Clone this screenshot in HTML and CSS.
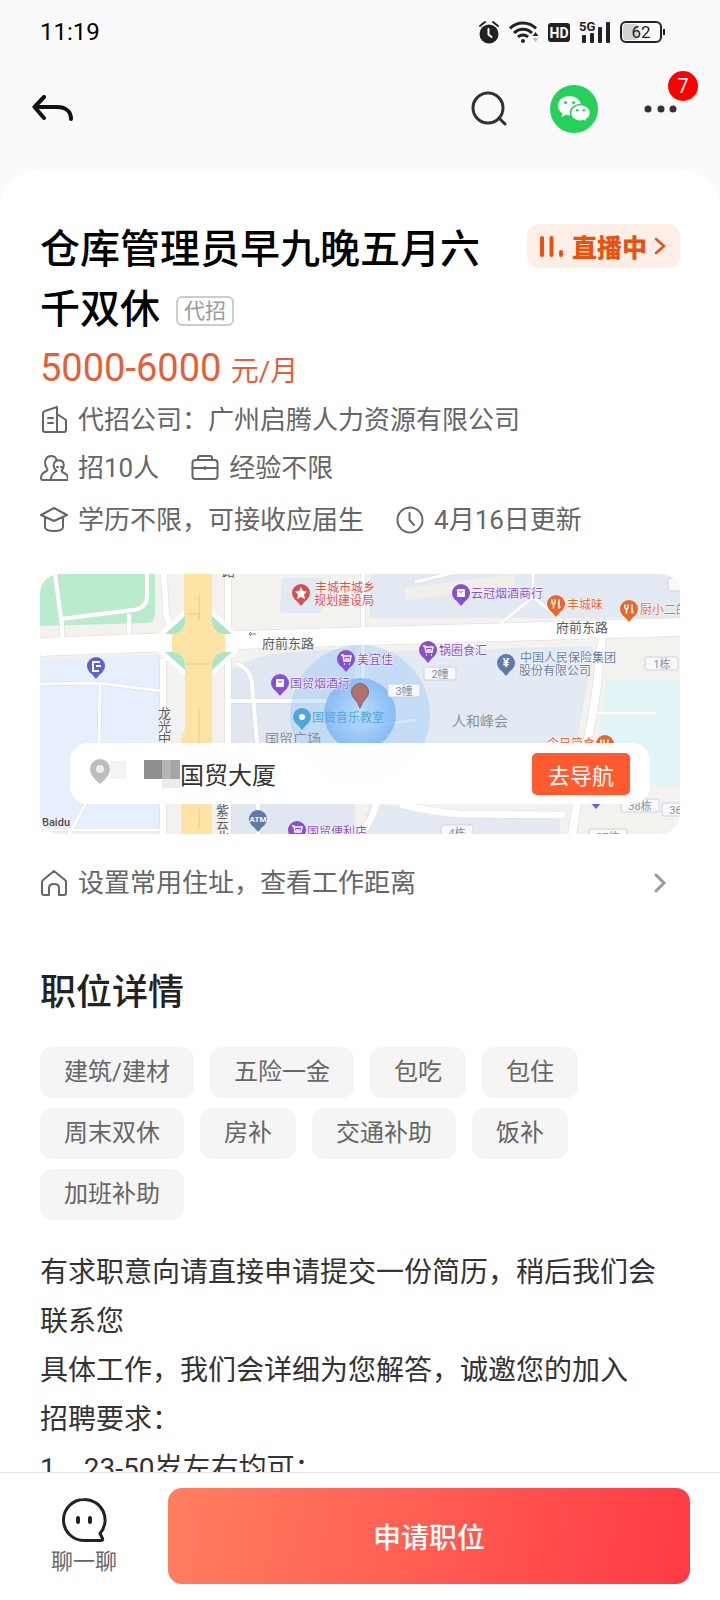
FILE: index.html
```html
<!DOCTYPE html>
<html lang="zh-CN">
  <head>
    <meta charset="UTF-8" />
    <meta name="viewport" content="width=device-width, initial-scale=1.0" />
    <title>职位详情</title>
    <link rel="stylesheet" href="styles.css">
  </head>
  <body>
    <div class="status-bar">
      <span class="time">11:19</span>
      <div class="status-icons">
        <svg width="22" height="24" viewBox="0 0 22 24">
          <circle cx="11" cy="14" r="9.500" fill="#222" />
          <path d="M2 6l5-4M20 6l-5-4" stroke="#222" stroke-width="2" stroke-linecap="round" />
          <path d="M10.500 9v5.500l3 2.500" stroke="#fff" stroke-width="2" fill="none" stroke-linecap="round" />
        </svg>
        <svg width="30" height="24" viewBox="0 0 30 24">
          <g fill="none" stroke="#222" stroke-width="3">
            <path d="M1 8.500a18 18 0 0 1 26 0" />
            <path d="M5 13a12.500 12.500 0 0 1 18 0" />
            <path d="M9 17a7.500 7.500 0 0 1 10 0" />
          </g>
          <circle cx="14" cy="21" r="2" fill="#222" />
          <path d="M26.500 12l3 4h-6z" fill="#222" />
          <path d="M26.500 22l3-4h-6z" fill="#bbb" />
        </svg>
        <svg width="22" height="24" viewBox="0 0 22 24">
          <rect x="0" y="3" width="22" height="19" rx="3" fill="#222" />
          <text x="11" y="18" class="hd-text">HD</text>
        </svg>
        <svg width="32" height="24" viewBox="0 0 32 24">
          <text x="0" y="11" class="net-text">5G</text>
          <g fill="#222">
            <rect x="3" y="15" width="4" height="8" rx="1" />
            <rect x="11" y="13" width="4" height="10" rx="1" />
            <rect x="19" y="7" width="4" height="16" rx="1" />
            <rect x="27" y="2" width="4" height="21" rx="1" />
          </g>
        </svg>
        <svg width="46" height="24" viewBox="0 0 46 24">
          <rect x="3" y="4" width="15" height="16" rx="3" fill="#d3d3d3" />
          <rect x="1" y="2" width="40" height="20" rx="5" fill="none" stroke="#222" stroke-width="2" />
          <path d="M44 9v6" stroke="#222" stroke-width="2" />
          <text x="21" y="18" class="battery-text">62</text>
        </svg>
      </div>
    </div>

    <nav class="nav-bar">
      <button class="icon-btn" aria-label="返回">
        <svg width="42" height="28" viewBox="0 0 42 28" fill="none" stroke="#111" stroke-width="4" stroke-linecap="round" stroke-linejoin="round">
          <path d="M12 2L2.500 12L12 23M3 12h22c8 0 14 4 14 12" />
        </svg>
      </button>
      <div class="nav-actions">
        <button class="icon-btn" aria-label="搜索">
          <svg width="38" height="38" viewBox="0 0 38 38" fill="none" stroke="#333" stroke-width="3" stroke-linecap="round">
            <circle cx="18" cy="18" r="15" />
            <path d="M29 28l6 6" />
          </svg>
        </button>
        <button class="icon-btn" aria-label="微信">
          <svg width="48" height="48" viewBox="0 0 48 48">
            <circle cx="24" cy="24" r="24" fill="#25d15a" />
            <path d="M19.500 11C13 11 8 15.300 8 20.800c0 3.200 1.800 6 4.500 7.800L11.500 32l4.300-2.200c1.200.3 2.400.5 3.700.5 6.500 0 11.500-4.200 11.500-9.500S26 11 19.500 11z" fill="#fff" />
            <path d="M30.500 19.500c-5.600 0-10 3.700-10 8.300s4.400 8.400 10 8.400c1.200 0 2.300-.2 3.400-.5l3.400 1.800-.8-3c2.500-1.500 4-4 4-6.700 0-4.600-4.400-8.300-10-8.300z" fill="#fff" stroke="#25d15a" stroke-width="1.500" />
            <g fill="#25d15a">
              <circle cx="15.500" cy="17.500" r="1.600" />
              <circle cx="23.500" cy="17.500" r="1.600" />
              <circle cx="27.300" cy="25.300" r="1.300" />
              <circle cx="33.800" cy="25.300" r="1.300" />
            </g>
          </svg>
        </button>
        <button class="icon-btn more-btn" aria-label="更多">
          <svg width="34" height="48" viewBox="0 0 34 48" fill="#333">
            <circle cx="4" cy="24" r="3.500" />
            <circle cx="17" cy="24" r="3.500" />
            <circle cx="29" cy="24" r="3.500" />
          </svg>
          <span class="badge">7</span>
        </button>
      </div>
    </nav>

    <main class="card">
      <div class="title-row">
        <h1>仓库管理员早九晚五月六千双休<span class="agent-tag">代招</span></h1>
        <a href="#live" class="live">
          <svg width="26" height="24" viewBox="0 0 26 24" stroke="#e8520f" stroke-width="4" stroke-linecap="round">
            <path d="M3 4v17M12.500 4v17M22 18v3" />
          </svg>
          直播中
          <svg width="12" height="20" viewBox="0 0 12 20" fill="none" stroke="#e8520f" stroke-width="2.500" stroke-linecap="round" stroke-linejoin="round">
            <path d="M2 3l8 7l-8 7" />
          </svg>
        </a>
      </div>
      <p class="salary">5000-6000 <span>元/月</span></p>

      <div class="info">
        <div class="info-row">
          <span class="info-item">
            <svg class="icon" viewBox="0 0 28 28">
              <path d="M17 1L5 5q-2 .7-2 2v17q0 2 2 2h12V1zM17 8l9 6v10q0 2-2 2h-7M8 12h5M8 17h5" />
            </svg>
            代招公司：广州启腾人力资源有限公司
          </span>
        </div>
        <div class="info-row">
          <span class="info-item">
            <svg class="icon" viewBox="0 0 28 28">
              <path d="M11 26H2.500Q1 26 1 24c0-4 2-5.500 5.500-7 1.500-.6 1-2 0-3.500C3 7 6.500 2 11 2c3 0 5 1.500 5.500 4" />
              <path d="M16.500 17c-2-2-3.500-4.500-2.500-7.500 1.500-4.500 8.500-4.500 9.500 0 1 3-.5 5-1.500 6.500-1 1 0 2 1.500 2.700C26 20 28 21 28 25q0 1-1 1H12q-1 0-1-1c0-4 2-6 5.500-8M17 13h1M21 13h1" />
            </svg>
            招10人
          </span>
          <span class="info-item">
            <svg class="icon" viewBox="0 0 28 28">
              <rect x="1.500" y="6" width="25" height="19" rx="3" />
              <path d="M7 6V4q0-2 2-2h10q2 0 2 2v2M1.500 14h25M14 13v2" />
            </svg>
            经验不限
          </span>
        </div>
        <div class="info-row">
          <span class="info-item">
            <svg class="icon" viewBox="0 0 28 28">
              <path d="M14 2L1 9l13 6 13-6zM5 11v10q0 4 9 4t9-4V11" />
            </svg>
            学历不限，可接收应届生
          </span>
          <span class="info-item">
            <svg class="icon" viewBox="0 0 28 28">
              <circle cx="14" cy="14" r="12.500" />
              <path d="M13.500 7v7l4.500 5" />
            </svg>
            4月16日更新
          </span>
        </div>
      </div>

      <section class="map">
        <svg class="map-canvas" viewBox="0 0 640 260" preserveAspectRatio="xMidYMid slice">
          <defs>
            <g id="pin">
              <path d="M-5 7L0 13L5 7z" />
              <circle r="9" />
            </g>
            <g id="cart" fill="none" stroke="#fff" stroke-width="1.500">
              <path d="M-5-4h2l1 6h6l1-5h-7M-1 0h4" />
              <path d="M-2 5h1M3 5h1" />
            </g>
            <g id="bag">
              <rect x="-4" y="-4" width="8" height="8" rx="1" fill="#fff" />
              <path d="M-2-2q2 3 4 0" fill="none" stroke="#8a4fd0" />
            </g>
            <g id="fork" fill="none" stroke="#fff" stroke-width="1.500" stroke-linecap="round">
              <path d="M-4-4v3q2 2 3 0v-3M-2.500 0v4M3-4v8M2.500 3h1.500" />
            </g>
            <radialGradient id="range">
              <stop offset="0" stop-color="#b9dcff" />
              <stop offset="1" stop-color="#78b4f4" />
            </radialGradient>
          </defs>
          <rect width="640" height="260" fill="#f3f2ee" />

          <!-- blocks -->
          <path d="M0 0h115v40q0 9-9 9L0 52z" fill="#b8eccd" />
          <path d="M0 86l120-6v180H0z" fill="#e7effc" />
          <path d="M242 4h42l-3 35h-38q-4 0-3-8z" fill="#e2e9f3" />
          <path d="M330 0h310v44l-310 0z" fill="#e2e9f3" />
          <path d="M190 95q30-16 65-17l60-4v186H190z" fill="#e0e7f1" />
          <path d="M328 78l220-6q6 0 5 8l-17 90H328z" fill="#e4eaf4" />
          <path d="M315 160h220v20H315zM330 230l190 14v16H320z" fill="#e4eaf4" />
          <path d="M567 106h73v106h-90z" fill="#e2f5f6" />
          <path d="M365 14l110-14v13l-110 13z" fill="#f1efe9" />

          <!-- street edges, then the white road surface on top -->
          <g class="road-edge">
            <path d="M0 73L130 68L330 62L640 53" stroke-width="19" />
            <path d="M15 0l7 52v14M21 45l72-9q14-2 14-14V0M89 40v22" stroke-width="5" />
            <path d="M124 0l2 40 8 20M123 85v175M188 0v260" stroke-width="7" />
            <path d="M0 110l57-1 66 8M60 110l-1 65M50 222l-22 40M0 256h123" stroke-width="4" />
            <path d="M323 0v130M196 90q14 3 16 20l6 70v80M190 127h100" stroke-width="5" />
            <path d="M563 55l-6 55q-2 20-10 60l-15 90" stroke-width="9" />
            <path d="M557 139h59M375 8l50-12M460 50l33-27 34 27M493 0v20M330 152l46-6" stroke-width="4" />
            <path d="M325 255q12-18 14-40M360 230q30 8 60 10l105 1" stroke-width="8" />
          </g>
          <g class="road">
            <path d="M0 73L130 68L330 62L640 53" stroke-width="18" />
            <path d="M15 0l7 52v14M21 45l72-9q14-2 14-14V0M89 40v22" stroke-width="4" />
            <path d="M124 0l2 40 8 20M123 85v175M188 0v260" stroke-width="6" />
            <path d="M0 110l57-1 66 8M60 110l-1 65M50 222l-22 40M0 256h123" stroke-width="3" />
            <path d="M323 0v130M196 90q14 3 16 20l6 70v80M190 127h100" stroke-width="4" />
            <path d="M563 55l-6 55q-2 20-10 60l-15 90" stroke-width="8" />
            <path d="M557 139h59M375 8l50-12M460 50l33-27 34 27M493 0v20M330 152l46-6" stroke-width="3" />
            <path d="M325 255q12-18 14-40M360 230q30 8 60 10l105 1" stroke-width="7" />
          </g>

          <!-- main avenue -->
          <path d="M118 60l26-24h28l26 24v18l-26 24h-28l-26-24z" fill="#fff" />
          <path d="M144 0h28v44q2 14 13 16v18q-11 2-12 18l-1 8v156h-31v-95l4-10v-59q-2-16-13-18V60q11-2 12-16z" fill="#fde3a6" />
          <path d="M125 60l20-18v6q-2 11-12 12zM192 60l-20-18v6q2 11 12 12zM125 78l20 18v-6q-2-11-12-12zM192 78l-20 18v-6q2-11 12-12z" fill="#a9e5c6" />
          <path d="M159 20v27M147 40h12M146 90h24M159 135v45M159 235v20" stroke="#ebc987" fill="none" />

          <!-- current position -->
          <circle cx="320" cy="141" r="70" fill="#8ac4f8" opacity=".35" />
          <circle cx="320" cy="140" r="36" fill="url(#range)" opacity=".8" />
          <path d="M320 134q-2-6-6-10a8.500 8.500 0 1 1 12 0q-4 4-6 10z" fill="#ae716f" stroke="#905a5c" />

          <g class="building">
            <rect x="384" y="93" width="32" height="13" rx="2" />
            <rect x="348" y="110" width="32" height="13" rx="2" />
            <rect x="605" y="83" width="33" height="13" rx="2" />
            <rect x="581" y="225" width="38" height="13" rx="2" />
            <rect x="622" y="229" width="38" height="13" rx="2" />
            <rect x="401" y="251" width="32" height="13" rx="2" />
            <rect x="549" y="255" width="38" height="13" rx="2" />
            <rect x="628" y="4" width="38" height="13" rx="2" />
            <text x="400" y="104">2幢</text>
            <text x="364" y="121">3幢</text>
            <text x="622" y="94">1栋</text>
            <text x="600" y="236">38栋</text>
            <text x="641" y="240">36栋</text>
            <text x="417" y="263">4栋</text>
            <text x="568" y="267">37栋</text>
          </g>

          <g class="street">
            <text x="222" y="74">府前东路</text>
            <text x="516" y="58">府前东路</text>
            <text x="118" y="144">龙</text>
            <text x="118" y="157">光</text>
            <text x="118" y="169">中</text>
            <text x="176" y="241">紫</text>
            <text x="176" y="254">云</text>
            <text x="176" y="267">北</text>
            <text x="182" y="2">路</text>
          </g>
          <path d="M216 60h-7m2-2l-2 2 2 2" stroke="#777" fill="none" />
          <g class="area">
            <text x="412" y="152">人和峰会</text>
            <text x="225" y="170">国贸广场</text>
          </g>

          <g class="poi gov">
            <use href="#pin" x="261" y="19" />
            <path d="M261 13l2 4 4 .5-3 3 1 4.500-4-2-4 2 1-4.500-3-3 4-.5z" fill="#fff" />
            <text x="275" y="18">丰城市城乡</text>
            <text x="274" y="31">规划建设局</text>
          </g>
          <g class="poi shop">
            <use href="#pin" x="421" y="19" /><use href="#bag" x="421" y="19" />
            <text x="431" y="24">云冠烟酒商行</text>
            <use href="#pin" x="306" y="85" /><use href="#cart" x="306" y="85" />
            <text x="317" y="90">美宜佳</text>
            <use href="#pin" x="240" y="109" /><use href="#bag" x="240" y="109" />
            <text x="250" y="114">国贸烟酒行</text>
            <use href="#pin" x="388" y="76" /><use href="#cart" x="388" y="76" />
            <text x="399" y="81">锅圈食汇</text>
            <use href="#pin" x="257" y="256" /><use href="#cart" x="257" y="256" />
            <text x="267" y="262">国贸便利店</text>
          </g>
          <g class="poi food">
            <use href="#pin" x="516" y="30" /><use href="#fork" x="516" y="30" />
            <text x="527" y="35">丰城味</text>
            <use href="#pin" x="589" y="35" /><use href="#fork" x="589" y="35" />
            <text x="600" y="40">厨小二的</text>
            <use href="#pin" x="565" y="170" /><use href="#fork" x="565" y="170" />
            <text x="507" y="174">今日简食</text>
          </g>
          <g class="poi music">
            <use href="#pin" x="262" y="143" /><circle cx="262" cy="143" r="3" fill="#fff" />
            <text x="272" y="148">国贸音乐教室</text>
          </g>
          <g class="poi bank">
            <use href="#pin" x="466" y="89" />
            <text x="466" y="93" class="pin-text yen">¥</text>
            <text x="480" y="88">中国人民保险集团</text>
            <text x="479" y="101">股份有限公司</text>
            <use href="#pin" x="218" y="245" />
            <text x="218" y="248" class="pin-text">ATM</text>
          </g>
          <g fill="#5a63cf">
            <use href="#pin" x="56" y="92" />
            <use href="#pin" x="556" y="222" />
          </g>
          <path d="M60 88h-7v9h6M56 92h5" stroke="#fff" stroke-width="2" fill="none" />
          <text x="2" y="252" class="provider">Baidu</text>
        </svg>
        <div class="place">
          <svg width="92" height="44" viewBox="0 0 92 44">
            <path d="M2 17a10 10 0 1 1 20 0q0 7-10 15Q2 24 2 17z" fill="#bdbdbd" />
            <circle cx="12" cy="17" r="4" fill="#eee" />
            <rect x="22" y="9" width="16" height="18" fill="#f4f4f4" />
            <rect x="56" y="8" width="18" height="19" fill="#8f8f8f" />
            <rect x="74" y="8" width="9" height="19" fill="#b4b4b4" />
            <rect x="83" y="8" width="9" height="19" fill="#a6a6a6" />
            <rect x="74" y="27" width="18" height="9" fill="#ececec" />
          </svg>
          <span class="place-name">国贸大厦</span>
          <button class="go-btn">去导航</button>
        </div>
      </section>

      <a href="#address" class="address">
        <span class="info-item">
          <svg class="icon" viewBox="0 0 28 28">
            <path d="M14 2L3 11q-1 1-1 2v11q0 2 2 2h5v-7q0-4 5-4t5 4v7h5q2 0 2-2V13q0-1-1-2z" />
          </svg>
          设置常用住址，查看工作距离
        </span>
        <svg width="12" height="20" viewBox="0 0 12 20" fill="none" stroke="#999" stroke-width="3" stroke-linecap="round">
          <path d="M2 2l8 8l-8 8" />
        </svg>
      </a>

      <h2>职位详情</h2>
      <ul class="tags">
        <li>建筑/建材</li>
        <li>五险一金</li>
        <li>包吃</li>
        <li>包住</li>
        <li>周末双休</li>
        <li>房补</li>
        <li>交通补助</li>
        <li>饭补</li>
        <li>加班补助</li>
      </ul>
      <p class="desc">
        有求职意向请直接申请提交一份简历，稍后我们会联系您<br />
        具体工作，我们会详细为您解答，诚邀您的加入<br />
        招聘要求：<br />
        1、23-50岁左右均可；
      </p>
    </main>

    <footer class="bottom-bar">
      <button class="chat-btn">
        <svg width="46" height="46" viewBox="0 0 46 46" fill="none" stroke="#222" stroke-width="3" stroke-linecap="round" stroke-linejoin="round">
          <path d="M23 2.500a20.500 20.500 0 1 0 0 41h17c1.500 0 2-1 1.500-2L39 36.500A20.500 20.500 0 0 0 23 2.500z" />
          <path d="M17 21v4M29 21v4" stroke-width="4" />
        </svg>
        聊一聊
      </button>
      <button class="apply-btn">申请职位</button>
    </footer>
  </body>
</html>
```
FILE: styles.css
```css
* {
  box-sizing: border-box;
}
body {
  font-family: Roboto, "Noto Sans CJK SC", sans-serif;
  background-color: #fafafa;
  color: #333;
  margin: 0;
  display: flex;
  flex-direction: column;
  height: 100vh;
}
button {
  font-family: inherit;
  border: none;
  cursor: pointer;
}
a {
  color: inherit;
  text-decoration: none;
}
h1,
h2,
p,
ul {
  margin: 0;
  padding: 0;
}
svg {
  display: block;
  flex-shrink: 0;
}
.status-bar {
  display: flex;
  justify-content: space-between;
  align-items: center;
  height: 64px;
  padding: 0 54px 0 40px;
}
.time {
  font-size: 24px;
  color: #000;
}
.status-icons {
  display: flex;
  align-items: center;
  gap: 9px;
}
.hd-text {
  font-size: 14px;
  font-weight: bold;
  fill: #fff;
  text-anchor: middle;
}
.net-text {
  font-size: 13px;
  font-weight: bold;
  fill: #222;
}
.battery-text {
  font-size: 17px;
  fill: #222;
  text-anchor: middle;
}
.nav-bar {
  display: flex;
  justify-content: space-between;
  align-items: center;
  height: 90px;
  margin-bottom: 16px;
  padding: 0 42px 0 32px;
  flex-shrink: 0;
}
.nav-actions {
  display: flex;
  align-items: center;
  gap: 42px;
}
.icon-btn {
  background: none;
  padding: 0;
}
.more-btn {
  position: relative;
  margin-left: 4px;
}
.badge {
  position: absolute;
  top: -14px;
  right: -20px;
  width: 30px;
  height: 30px;
  border-radius: 50%;
  background-color: #fe0000;
  color: #fff;
  font-size: 20px;
  line-height: 30px;
}
.card {
  flex: 1;
  min-height: 0;
  overflow: hidden;
  background-color: #fff;
  border-radius: 40px 40px 0 0;
  padding: 50px 40px 0;
}
.title-row {
  display: flex;
  justify-content: space-between;
  align-items: flex-start;
  gap: 32px;
  margin-bottom: 4px;
}
h1 {
  flex: 1;
  font-size: 40px;
  font-weight: 500;
  line-height: 60px;
  color: #000;
}
.agent-tag {
  display: inline-block;
  margin-left: 16px;
  padding: 0 6px;
  border: 2px solid #ccc;
  border-radius: 6px;
  font-size: 21px;
  font-weight: 400;
  line-height: 26px;
  color: #999;
  vertical-align: 5px;
}
.live {
  display: flex;
  align-items: center;
  gap: 7px;
  height: 44px;
  margin-top: 4px;
  padding: 0 14px 0 12px;
  border-radius: 12px;
  background-color: #fdefe8;
  color: #e8520f;
  font-size: 25px;
  font-weight: 900;
}
.salary {
  font-size: 38px;
  line-height: 48px;
  color: #e2603a;
}
.salary span {
  font-size: 28px;
}
.info-row {
  display: flex;
  gap: 32px;
}
.info-row:last-child {
  margin-top: 4px;
}
.info-item {
  display: flex;
  align-items: center;
  gap: 10px;
  font-size: 26px;
  line-height: 48px;
  color: #666;
}
.icon {
  width: 28px;
  height: 28px;
  fill: none;
  stroke: #666;
  stroke-width: 2;
  stroke-linecap: round;
  stroke-linejoin: round;
}
.map {
  position: relative;
  height: 260px;
  margin: 30px 0 25px;
  border-radius: 20px;
  overflow: hidden;
}
.map-canvas {
  width: 100%;
  height: 100%;
}
.road-edge,
.road {
  fill: none;
  stroke: #fff;
}
.road-edge {
  stroke: #d9dade;
}
.building rect {
  fill: #f7f9fc;
  stroke: #cdd2da;
}
.building text {
  font-size: 11px;
  fill: #8b909b;
  text-anchor: middle;
}
.street text {
  font-size: 13px;
  fill: #5c5c60;
}
.area text {
  font-size: 14px;
  fill: #8b919c;
}
.poi text {
  font-size: 12px;
  stroke: #fff;
  stroke-width: 1px;
  paint-order: stroke;
}
.gov {
  fill: #d8504d;
}
.shop {
  fill: #8a4fd0;
}
.food {
  fill: #e5682f;
}
.music {
  fill: #4fa6d9;
}
.music text {
  stroke: none;
}
.bank {
  fill: #5f7aa8;
}
.poi .pin-text {
  font-size: 8px;
  font-weight: bold;
  fill: #fff;
  stroke: none;
  text-anchor: middle;
}
.poi .yen {
  font-size: 12px;
}
.provider {
  font-size: 11px;
  font-weight: 500;
  fill: #5b4a4a;
}
.place {
  position: absolute;
  left: 30px;
  right: 30px;
  bottom: 30px;
  height: 61px;
  display: flex;
  align-items: center;
  padding: 0 20px 0 18px;
  border-radius: 18px;
  background-color: rgba(255, 255, 255, 0.97);
}
.place-name {
  flex: 1;
  font-size: 24px;
}
.go-btn {
  height: 42px;
  padding: 0 16px;
  border-radius: 5px;
  background-color: #ff5a30;
  color: #fff;
  font-size: 22px;
}
.address {
  display: flex;
  justify-content: space-between;
  align-items: center;
  padding-right: 14px;
}
h2 {
  margin: 62px 0 30px;
  font-size: 36px;
  font-weight: 500;
  line-height: 48px;
  color: #222;
}
.tags {
  display: flex;
  flex-wrap: wrap;
  gap: 10px 16px;
  list-style: none;
}
.tags li {
  padding: 0 24px;
  border-radius: 12px;
  background-color: #f5f5f5;
  color: #666;
  font-size: 24px;
  line-height: 51px;
}
.desc {
  margin-top: 28px;
  font-size: 28px;
  line-height: 49px;
}
.bottom-bar {
  display: flex;
  align-items: center;
  padding: 15px 30px 16px 44px;
  border-top: 1px solid #e5e5e5;
  background-color: #fff;
}
.chat-btn {
  display: flex;
  flex-direction: column;
  align-items: center;
  width: 80px;
  margin-right: 44px;
  padding: 0;
  background: none;
  color: #666;
  font-size: 22px;
}
.apply-btn {
  flex: 1;
  height: 96px;
  border-radius: 14px;
  background: linear-gradient(100deg, #ff7f61, #ff3a44);
  color: #fff;
  font-size: 28px;
  font-weight: 500;
}
```
